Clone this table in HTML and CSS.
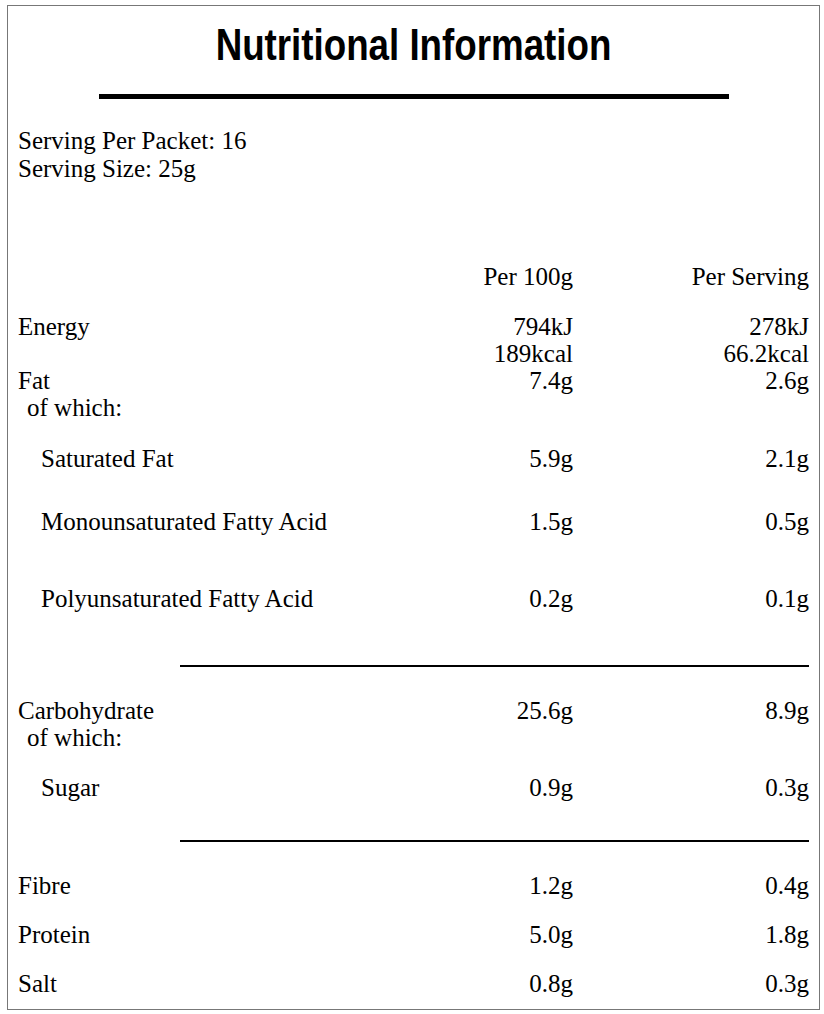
FILE: index.html
```html
<!DOCTYPE html>
<html lang="en">
<head>
<meta charset="utf-8">
<title>Nutritional Information</title>
<link rel="stylesheet" href="styles.css">
</head>
<body>
<div class="label">
  <h1 class="title">Nutritional Information</h1>
  <div class="title-rule"></div>
  <div class="serving">
    <div>Serving Per Packet: 16</div>
    <div>Serving Size: 25g</div>
  </div>
  <div class="table">
    <div class="row head">
      <div class="name"></div>
      <div class="val">Per 100g</div>
      <div class="val">Per Serving</div>
    </div>
    <div class="row energy">
      <div class="name">Energy</div>
      <div class="val">794kJ<br>189kcal</div>
      <div class="val">278kJ<br>66.2kcal</div>
    </div>
    <div class="row">
      <div class="name">Fat</div>
      <div class="val">7.4g</div>
      <div class="val">2.6g</div>
    </div>
    <div class="row">
      <div class="name of">of which:</div>
      <div class="val"></div>
      <div class="val"></div>
    </div>
    <div class="row sat">
      <div class="name sub">Saturated Fat</div>
      <div class="val">5.9g</div>
      <div class="val">2.1g</div>
    </div>
    <div class="row mono">
      <div class="name sub">Monounsaturated Fatty Acid</div>
      <div class="val">1.5g</div>
      <div class="val">0.5g</div>
    </div>
    <div class="row poly">
      <div class="name sub">Polyunsaturated Fatty Acid</div>
      <div class="val">0.2g</div>
      <div class="val">0.1g</div>
    </div>
    <div class="divider d1"></div>
    <div class="row carb">
      <div class="name">Carbohydrate</div>
      <div class="val">25.6g</div>
      <div class="val">8.9g</div>
    </div>
    <div class="row">
      <div class="name of">of which:</div>
      <div class="val"></div>
      <div class="val"></div>
    </div>
    <div class="row sugar">
      <div class="name sub">Sugar</div>
      <div class="val">0.9g</div>
      <div class="val">0.3g</div>
    </div>
    <div class="divider d2"></div>
    <div class="row fibre">
      <div class="name">Fibre</div>
      <div class="val">1.2g</div>
      <div class="val">0.4g</div>
    </div>
    <div class="row plain">
      <div class="name">Protein</div>
      <div class="val">5.0g</div>
      <div class="val">1.8g</div>
    </div>
    <div class="row plain">
      <div class="name">Salt</div>
      <div class="val">0.8g</div>
      <div class="val">0.3g</div>
    </div>
  </div>
</div>
</body>
</html>
```
FILE: styles.css
```css
html, body {
  margin: 0;
  padding: 0;
  background: #ffffff;
}

body {
  font-family: "Liberation Serif", "Times New Roman", serif;
  color: #000000;
}

.label {
  box-sizing: border-box;
  width: 813px;
  height: 1005px;
  margin: 5px 0 0 7px;
  padding: 14px 10px 0 10px;
  border: 1px solid #777777;
}

.title {
  margin: 0;
  font-family: "Liberation Sans", Arial, sans-serif;
  font-weight: bold;
  font-size: 45px;
  line-height: 50px;
  text-align: center;
  transform: scaleX(0.816);
}

.title-rule {
  width: 630px;
  height: 5px;
  margin: 24px auto 0 auto;
  background: #000000;
}

.serving {
  margin-top: 28px;
  font-size: 25px;
  line-height: 28px;
}

.table {
  margin-top: 80px;
  font-size: 25px;
  line-height: 27px;
}

.row {
  display: grid;
  grid-template-columns: 1fr 150px 236px;
}

.val {
  text-align: right;
}

.of {
  padding-left: 9px;
}

.sub {
  padding-left: 23px;
}

.energy { margin-top: 23px; }
.sat { margin-top: 24px; }
.mono { margin-top: 36px; }
.poly { margin-top: 50px; }
.carb { margin-top: 30px; }
.sugar { margin-top: 23px; }
.fibre { margin-top: 30px; }
.plain { margin-top: 22px; }

.divider {
  height: 2px;
  background: #000000;
  margin-left: 162px;
}

.d1 { margin-top: 53px; }
.d2 { margin-top: 39px; }
```
